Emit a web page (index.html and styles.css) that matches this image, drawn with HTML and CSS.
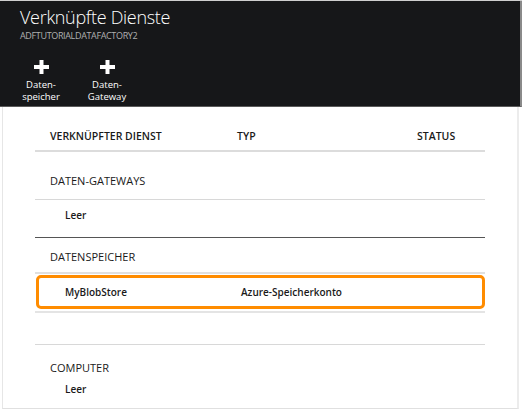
FILE: index.html
```html
<!DOCTYPE html>
<html lang="de">
<head>
<meta charset="utf-8">
<link rel="stylesheet" href="styles.css">
</head>
<body>
<div class="blade">
  <header class="head">
    <h1 class="title">Verknüpfte Dienste</h1>
    <div class="subtitle">ADFTUTORIALDATAFACTORY2</div>
    <div class="commands">
      <div class="cmd">
        <svg class="plus" width="15" height="14" viewBox="0 0 15 14"><rect x="5.5" y="0" width="4" height="14" fill="#fff"/><rect x="0" y="5" width="15" height="4" fill="#fff"/></svg>
        <span>Daten-<br>speicher</span>
      </div>
      <div class="cmd">
        <svg class="plus" width="15" height="14" viewBox="0 0 15 14"><rect x="5.5" y="0" width="4" height="14" fill="#fff"/><rect x="0" y="5" width="15" height="4" fill="#fff"/></svg>
        <span>Daten-<br>Gateway</span>
      </div>
    </div>
  </header>
  <main class="content">
    <div class="grid">
      <div class="row colhead">
        <span class="c1">VERKNÜPFTER DIENST</span>
        <span class="c2">TYP</span>
        <span class="c3">STATUS</span>
      </div>
      <div class="row group g1"><span class="c1">DATEN-GATEWAYS</span></div>
      <div class="row item i1"><span class="c1 in">Leer</span></div>
      <div class="row group g2"><span class="c1">DATENSPEICHER</span></div>
      <div class="row item sel">
        <span class="c1 in">MyBlobStore</span>
        <span class="c2">Azure-Speicherkonto</span>
      </div>
      <div class="row spacer"></div>
      <div class="row group g3"><span class="c1">COMPUTER</span></div>
      <div class="row item last"><span class="c1 in">Leer</span></div>
    </div>
  </main>
</div>
</body>
</html>
```

FILE: styles.css
```css
* { box-sizing: border-box; }
html, body { margin: 0; padding: 0; background: #fff; }
body { font-family: "Open Sans", "Noto Sans", sans-serif; width: 522px; height: 411px; overflow: hidden; }

.blade {
  width: 522px;
  height: 411px;
  display: flex;
  flex-direction: column;
  border-top: 1px solid #cfcfcf;
}

.head {
  background: #161719;
  height: 106px;
  border-right: 2px solid #8a8a8a;
  border-bottom: 1px solid #5a5a5a;
  padding: 4px 0 0 20px;
  color: #fff;
}
.title {
  margin: 0;
  font-size: 18px;
  font-weight: 300;
  line-height: 24px;
  letter-spacing: -0.3px;
}
.subtitle {
  font-size: 9px;
  color: #b0b0b0;
  line-height: 12px;
  margin-top: 1px;
  letter-spacing: -0.35px;
}
.commands {
  display: flex;
  gap: 18px;
  margin-top: 18px;
  margin-left: -3px;
}
.cmd {
  width: 48px;
  display: flex;
  flex-direction: column;
  align-items: center;
  font-size: 9.5px;
  line-height: 12px;
  text-align: center;
  color: #fff;
}
.plus { display: block; margin-bottom: 5px; }

.content {
  flex: 1;
  margin: 0 3px 2px 2px;
  border-left: 1px solid #e6e6e6;
  border-right: 2px solid #ececec;
  border-bottom: 1px solid #e0e0e0;
  padding-left: 32px;
}
.grid { width: 450px; }
.row {
  display: flex;
  align-items: center;
  font-size: 10px;
  color: #1a1a1a;
  font-weight: 600;
}
.c1 { width: 202px; padding-left: 15px; }
.c1.in { padding-left: 30px; }
.c2 { width: 180px; }
.c3 { flex: 1; }

.colhead { height: 45px; padding-top: 14px; border-bottom: 2px solid #dcdcdc; font-size: 10.5px; }
.g1 { height: 48px; padding-top: 10px; border-bottom: 1px solid #d8d8d8; }
.i1 { height: 38px; padding-bottom: 8px; border-bottom: 1px solid #555; }
.g2 { height: 36px; padding-top: 3px; border-bottom: 2px solid #e0e0e0; }
.sel {
  height: 34px;
  margin: 1px 0 2px 1px;
  border: 3px solid #ff8c00;
  border-radius: 5px;
}
.sel .c1.in { padding-left: 26px; }
.sel .c2 { padding-left: 0; }
.spacer { height: 34px; border-top: 2px solid #e4e4e4; border-bottom: 1px solid #d8d8d8; }
.g3 { height: 38px; padding-top: 6px; }
.group { font-weight: 400; font-size: 11px; }
.last { height: 12px; }
```
